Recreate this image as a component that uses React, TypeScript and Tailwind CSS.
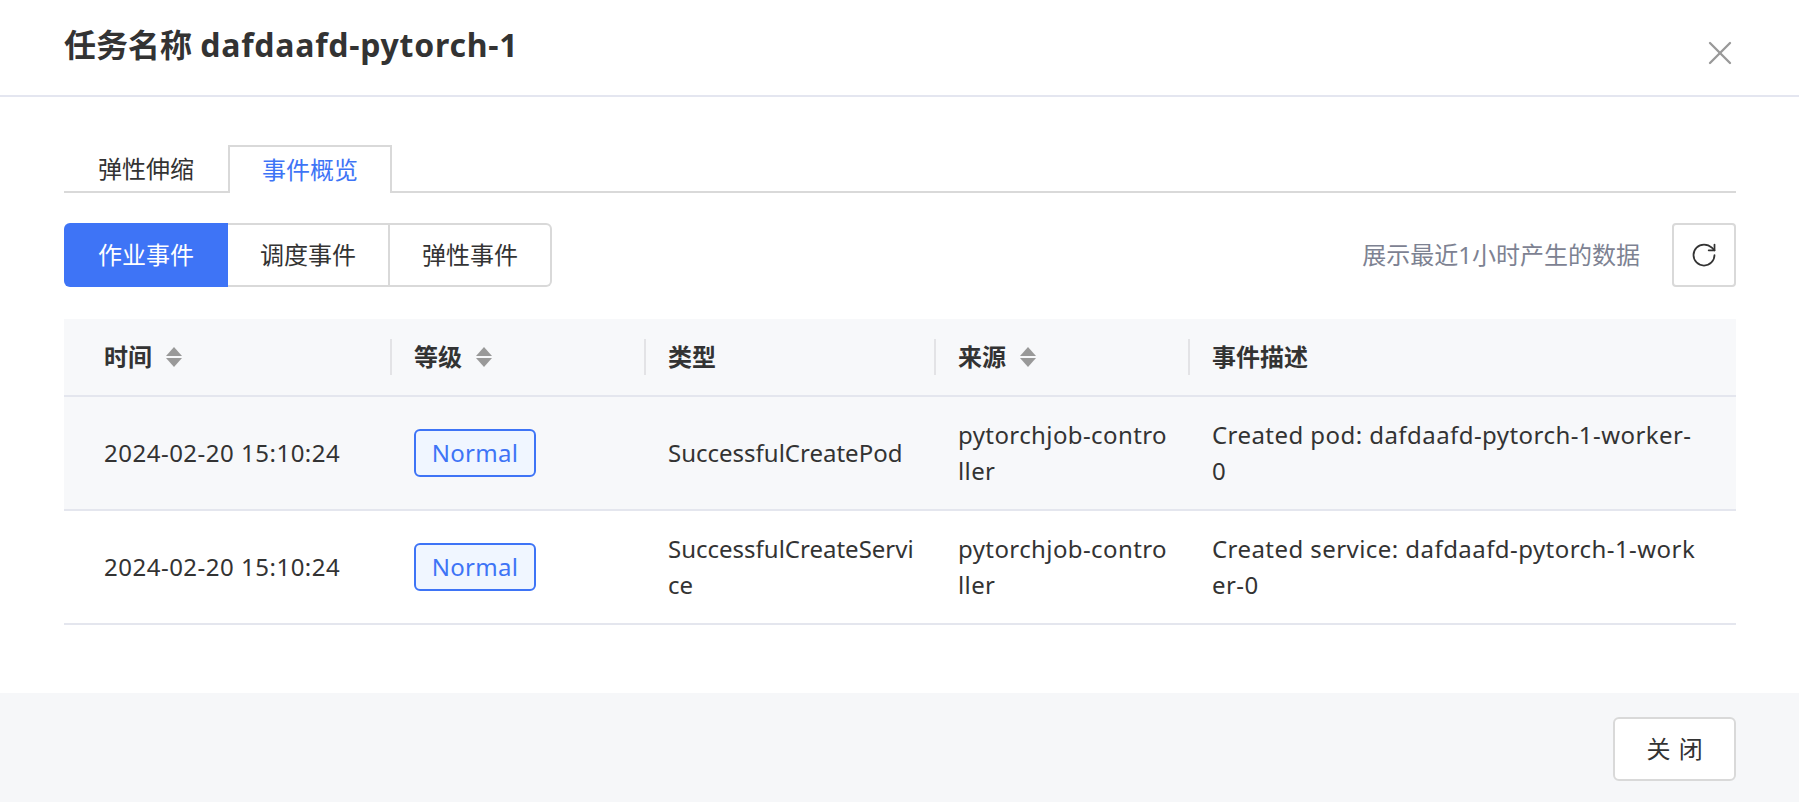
import { RotateCw, X } from 'lucide-react'

const ROWS = [
  {
    time: '2024-02-20 15:10:24',
    type: 'SuccessfulCreatePod',
    source: 'pytorchjob-controller',
    desc: 'Created pod: dafdaafd-pytorch-1-worker-0',
    shaded: true,
  },
  {
    time: '2024-02-20 15:10:24',
    type: 'SuccessfulCreateService',
    source: 'pytorchjob-controller',
    desc: 'Created service: dafdaafd-pytorch-1-worker-0',
    shaded: false,
  },
]

function SortIcon() {
  return (
    <svg className="ml-[14px] h-[20px] w-[16px] text-[#999999]" viewBox="0 0 16 20" fill="currentColor">
      <path d="M8 0l8 9H0z" />
      <path d="M0 11h16l-8 9z" />
    </svg>
  )
}

function HeadCell({ label, sortable, first }: { label: string; sortable?: boolean; first?: boolean }) {
  return (
    <th className={`relative border-b-2 border-[#e4e6ee] pr-6 text-left font-bold ${first ? 'pl-10' : 'pl-6'}`}>
      {!first && <span className="absolute left-0 top-[20px] h-[36px] w-[2px] bg-[#e3e3e6]" />}
      <div className="flex items-center">
        {label}
        {sortable && <SortIcon />}
      </div>
    </th>
  )
}

export default function App() {
  return (
    <div className="flex h-[802px] w-full flex-col overflow-hidden bg-white font-['Noto_Sans','Noto_Sans_CJK_SC',sans-serif] text-[24px] leading-[36px] text-[#333333]">
      <header className="flex h-[97px] shrink-0 items-start justify-between border-b-2 border-[#e4e6f0] pl-16 pr-[59px]">
        <h1 className="mt-[21px] text-[32px] font-bold leading-[48px]">
          任务名称 <span className="tracking-[0.75px]">dafdaafd-pytorch-1</span>
        </h1>
        <X className="mt-[33px] h-[40px] w-[40px] text-[#999999]" strokeWidth={1.4} />
      </header>

      <main className="flex-1 pl-16 pr-[63px] pt-12">
        <div className="flex h-[48px] border-b-2 border-[#d9d9d9]">
          <div className="flex h-[48px] w-[164px] items-center justify-center">弹性伸缩</div>
          <div className="flex h-[48px] w-[164px] items-center justify-center border-2 border-b-0 border-[#d9d9d9] bg-white text-[#3e74f6]">
            事件概览
          </div>
        </div>

        <div className="mt-[30px] flex items-center justify-between">
          <div className="flex h-[64px]">
            <div className="flex w-[164px] items-center justify-center rounded-l-md bg-[#3e74f6] text-white">作业事件</div>
            <div className="flex w-[162px] items-center justify-center border-y-2 border-r-2 border-[#d9d9d9]">调度事件</div>
            <div className="flex w-[162px] items-center justify-center rounded-r-md border-y-2 border-r-2 border-[#d9d9d9]">弹性事件</div>
          </div>
          <div className="flex items-center">
            <span className="text-[#7d8292]">展示最近1小时产生的数据</span>
            <button type="button" className="ml-8 flex h-[64px] w-[64px] items-center justify-center rounded-[4px] border-2 border-[#d9d9d9]">
              <RotateCw className="h-[28px] w-[28px] text-[#333333]" strokeWidth={1.5} />
            </button>
          </div>
        </div>

        <table className="mt-[32px] w-full table-fixed border-collapse">
          <colgroup>
            <col className="w-[326px]" />
            <col className="w-[254px]" />
            <col className="w-[290px]" />
            <col className="w-[254px]" />
            <col />
          </colgroup>
          <thead>
            <tr className="h-[77px] bg-[#f7f8fa]">
              <HeadCell label="时间" sortable first />
              <HeadCell label="等级" sortable />
              <HeadCell label="类型" />
              <HeadCell label="来源" sortable />
              <HeadCell label="事件描述" />
            </tr>
          </thead>
          <tbody>
            {ROWS.map((row) => (
              <tr key={row.type} className={`h-[114px] border-b-2 border-[#e4e6ee] ${row.shaded ? 'bg-[#f7f8fa]' : 'bg-white'}`}>
                <td className="pl-10 pr-6 tracking-[0.5px]">{row.time}</td>
                <td className="pl-6 pr-6">
                  <span className="inline-flex h-[48px] w-[122px] items-center justify-center rounded-md border-2 border-[#3e74f6] bg-[#f0f6ff] tracking-[0.25px] text-[#3e74f6]">
                    Normal
                  </span>
                </td>
                <td className="break-all pl-6 pr-5">{row.type}</td>
                <td className="break-all pl-6 pr-5 tracking-[0.4px]">{row.source}</td>
                <td className="break-all pl-6 pr-10 tracking-[0.44px]">{row.desc}</td>
              </tr>
            ))}
          </tbody>
        </table>
      </main>

      <footer className="flex h-[109px] shrink-0 items-start justify-end bg-[#f6f7f9] pr-[63px] pt-6">
        <button type="button" className="h-[64px] w-[123px] rounded-md border-2 border-[#d9d9d9] bg-white">
          关 <span className="ml-[2px]">闭</span>
        </button>
      </footer>
    </div>
  )
}
